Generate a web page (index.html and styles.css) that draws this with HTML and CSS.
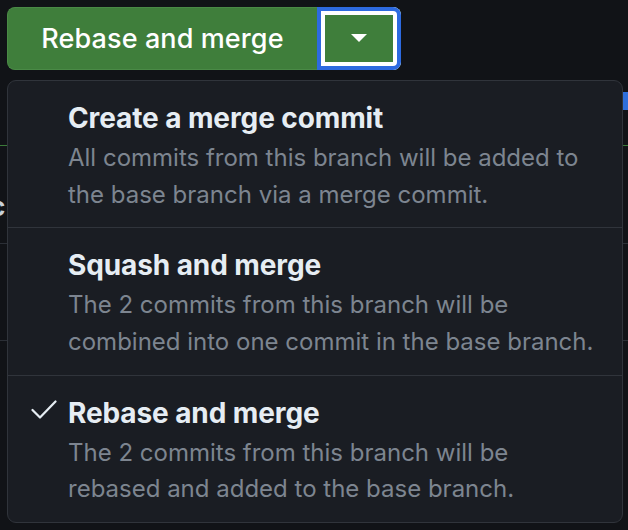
FILE: index.html
```html
<!DOCTYPE html>
<html lang="en">
<head>
<meta charset="utf-8">
<title>Merge options</title>
<link rel="stylesheet" href="styles.css">
</head>
<body>
<div class="page">
  <div class="btn-group">
    <button class="btn-main">Rebase and merge</button>
    <button class="btn-caret" aria-label="Select merge method">
      <svg width="18" height="10" viewBox="0 0 18 10"><polygon fill="#ffffff" points="1,1 17,1 9,9"/></svg>
    </button>
  </div>

  <div class="backdrop">
    <div class="rule rule-green"></div>
    <div class="peek-text">c</div>
    <div class="rule rule-gray first"></div>
    <div class="rule rule-gray second"></div>
    <div class="right-flag"></div>
  </div>

  <div class="menu" role="menu">
    <div class="item">
      <span class="check"></span>
      <div class="item-body">
        <div class="title">Create a merge commit</div>
        <div class="desc">All commits from this branch will be added to<br>the base branch via a merge commit.</div>
      </div>
    </div>
    <div class="item">
      <span class="check"></span>
      <div class="item-body">
        <div class="title">Squash and merge</div>
        <div class="desc">The 2 commits from this branch will be<br>combined into one commit in the base branch.</div>
      </div>
    </div>
    <div class="item">
      <span class="check">
        <svg width="26" height="20" viewBox="0 0 26 20"><polyline points="1.5,10 9,17.5 24.5,1.5" fill="none" stroke="#e6edf3" stroke-width="2.2" stroke-linecap="round" stroke-linejoin="round"/></svg>
      </span>
      <div class="item-body">
        <div class="title">Rebase and merge</div>
        <div class="desc">The 2 commits from this branch will be<br>rebased and added to the base branch.</div>
      </div>
    </div>
  </div>
</div>
</body>
</html>
```

FILE: styles.css
```css
html, body {
  margin: 0;
  padding: 0;
  background: #111317;
  width: 628px;
  height: 530px;
  overflow: hidden;
  font-family: Inter, "Liberation Sans", sans-serif;
}

.page {
  position: relative;
  width: 628px;
  height: 530px;
  overflow: hidden;
}

.btn-group {
  display: flex;
  padding: 7px 0 0 7px;
  height: 63px;
}

.btn-main {
  width: 310px;
  height: 63px;
  margin: 0;
  padding: 0 0 1px 0;
  border: 1px solid #4a8a46;
  border-right: none;
  border-radius: 8px 0 0 8px;
  background: #3f7e3b;
  color: #ffffff;
  font-family: Inter, "Liberation Sans", sans-serif;
  font-size: 27px;
  font-weight: 500;
  letter-spacing: 0.1px;
}

.btn-caret {
  width: 84px;
  height: 63px;
  margin: 0;
  padding: 0 0 2px 0;
  border: none;
  border-radius: 0 8px 8px 0;
  background: #3f7e3b;
  box-shadow: inset 0 0 0 4px #2d6ae0, inset 0 0 0 8px #ffffff;
  display: flex;
  align-items: center;
  justify-content: center;
}

.btn-caret svg {
  display: block;
}

.backdrop {
  position: relative;
  display: flow-root;
  height: 460px;
}

.rule {
  height: 1px;
  width: 628px;
}

.rule-green {
  margin-top: 75px;
  background: #3b7a39;
}

.peek-text {
  margin-left: -10px;
  margin-top: 46px;
  font-size: 26px;
  font-weight: 700;
  color: #c9d1d9;
  line-height: 30px;
}

.rule-gray {
  background: #2b2f36;
}

.rule-gray.first {
  margin-top: 21px;
}

.rule-gray.second {
  margin-top: 96px;
}

.right-flag {
  position: absolute;
  right: 0;
  top: 22px;
  width: 6px;
  height: 18px;
  background: #2f6fdc;
}

.menu {
  position: absolute;
  left: 7px;
  top: 80px;
  width: 614px;
  height: 441px;
  background: #1a1d23;
  border: 1px solid #30343b;
  border-radius: 9px;
  display: flex;
  flex-direction: column;
  overflow: hidden;
}

.item {
  display: flex;
  align-items: flex-start;
  height: 147px;
  box-sizing: border-box;
  padding: 19px 12px 0 23px;
}

.item + .item {
  border-top: 1px solid #30343b;
  height: 148px;
  padding-top: 19px;
}

.check {
  width: 37px;
  flex: none;
  padding-top: 5px;
}

.check svg {
  display: block;
}

.item-body {
  display: flex;
  flex-direction: column;
}

.title {
  color: #e6edf3;
  font-size: 28px;
  font-weight: 700;
  line-height: 37px;
  letter-spacing: -0.1px;
  white-space: nowrap;
}

.desc {
  margin-top: 3px;
  color: #7d8590;
  font-size: 24px;
  font-weight: 400;
  line-height: 36.5px;
  white-space: nowrap;
}
```
